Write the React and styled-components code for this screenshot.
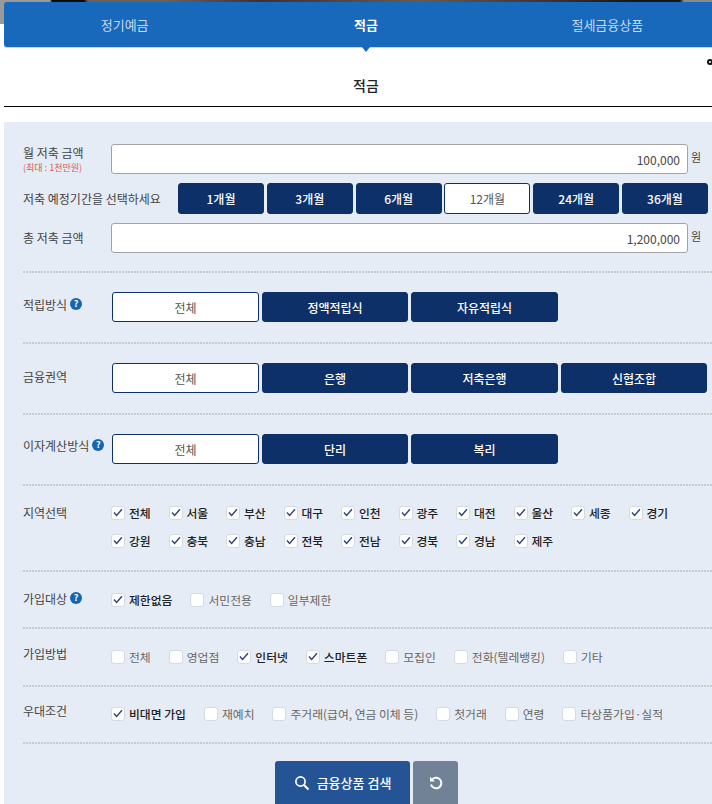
import React from 'react';
import styled, { createGlobalStyle } from 'styled-components';

const GlobalStyle = createGlobalStyle`
  html, body {
    margin: 0;
    padding: 0;
    background: #fff;
    overflow: hidden;
  }
  body {
    font-family: "Noto Sans CJK KR", "Noto Sans", sans-serif;
    color: #333;
  }
`;

const Page = styled.div`
  position: relative;
  width: 712px;
  height: 804px;
  overflow: hidden;
  padding-left: 4px;
  box-sizing: border-box;
`;

const Hero = styled.div`
  position: absolute;
  top: 0;
  left: 0;
  width: 712px;
  height: 24px;
  background: linear-gradient(90deg, #9a9a9a 0, #9a9a9a 50px, #0c0c10 52px, #0c0c10 84px, #6e5f57 88px, #6e5f57 170px, #3c3230 260px, #6a5a50 420px, #3a302c 560px, #14141a 640px, #14141a 680px, #8a8a8a 684px);
`;

const Tabs = styled.div`
  position: relative;
  display: grid;
  grid-template-columns: repeat(3, 1fr);
  width: 724px;
  height: 45px;
  margin-top: 2px;
  background: #1868bb;
  border-radius: 3px 0 0 3px;
  box-shadow: 0 1px 0 #c4d6ea;
`;

const Tab = styled.div`
  display: flex;
  align-items: center;
  justify-content: center;
  position: relative;
  font-size: 13px;
  color: ${(p) => (p.$active ? '#fff' : '#c6daf0')};
  font-weight: ${(p) => (p.$active ? 700 : 400)};
  ${(p) =>
    p.$active &&
    `&:after {
      content: '';
      position: absolute;
      left: 50%;
      bottom: -5px;
      margin-left: -4px;
      border-left: 4px solid transparent;
      border-right: 4px solid transparent;
      border-top: 5px solid #1868bb;
    }`}
`;

const Title = styled.h2`
  margin: 0;
  height: 60px;
  padding-top: 27px;
  box-sizing: border-box;
  border-bottom: 1px solid #000;
  font-size: 14px;
  line-height: 22px;
  font-weight: 500;
  color: #222;
  text-align: center;
  width: 724px;
`;

const Dot = styled.span`
  position: absolute;
  top: 59px;
  left: 707px;
  width: 6px;
  height: 6px;
  border: 2px solid #111;
  border-radius: 50%;
  box-sizing: border-box;
`;

const Panel = styled.div`
  margin-top: 15px;
  width: 708px;
  height: 700px;
  background: #e6ecf5;
  padding: 22px 0 0 19px;
  box-sizing: border-box;
`;

const Row = styled.div`
  display: flex;
  align-items: ${(p) => p.$align || 'center'};
  height: ${(p) => p.$h}px;
  margin-bottom: ${(p) => p.$mb || 0}px;
`;

const Label = styled.div`
  width: ${(p) => p.$w || 88}px;
  flex-shrink: 0;
  box-sizing: border-box;
  padding-bottom: ${(p) => p.$raise || 0}px;
  font-size: 12px;
  line-height: 16px;
  color: #444;
  white-space: nowrap;
`;

const Limit = styled.div`
  margin-top: 1px;
  font-size: 9px;
  line-height: 11px;
  color: #d0605f;
`;

const AmountInput = styled.div`
  width: 577px;
  height: 30px;
  box-sizing: border-box;
  background: #fff;
  border: 1px solid #a3a3a3;
  border-radius: 3px;
  padding-right: 7px;
  font-size: 12px;
  line-height: 30px;
  text-align: right;
  color: #444;
`;

const Unit = styled.span`
  margin-left: 3px;
  font-size: 11px;
  color: #444;
  align-self: flex-start;
  line-height: 26px;
`;

const Buttons = styled.div`
  display: flex;
  gap: ${(p) => p.$gap || 3}px;
`;

const Choice = styled.div`
  width: ${(p) => p.$w}px;
  height: ${(p) => p.$h || 30}px;
  box-sizing: border-box;
  display: flex;
  align-items: center;
  justify-content: center;
  border-radius: 3px;
  border: 1px solid #0e3068;
  font-size: 12px;
  background: ${(p) => (p.$on ? '#fff' : '#0e3068')};
  color: ${(p) => (p.$on ? '#555' : '#fff')};
  font-weight: ${(p) => (p.$on ? 400 : 500)};
`;

const Dash = styled.div`
  width: 689px;
  height: 2px;
  margin: ${(p) => p.$top}px 0 ${(p) => p.$bottom}px;
  background: repeating-linear-gradient(90deg, #c8cacd 0, #c8cacd 2px, transparent 2px, transparent 3px);
`;

const Help = styled.span`
  display: inline-flex;
  align-items: center;
  justify-content: center;
  width: 12px;
  height: 12px;
  margin-left: 3px;
  border-radius: 50%;
  background: #1565b0;
  color: #fff;
  font-size: 9px;
  font-weight: 700;
  line-height: 12px;
  vertical-align: 3px;
`;

const Checks = styled.div`
  display: flex;
  flex-wrap: wrap;
  row-gap: 13px;
  width: 600px;
`;

const Check = styled.div`
  display: flex;
  align-items: center;
  height: 15px;
  width: ${(p) => p.$w}px;
  margin-right: ${(p) => (p.$w ? 0 : p.$mr ?? 18)}px;
  font-size: 11.8px;
  line-height: 15px;
  white-space: nowrap;
  color: ${(p) => (p.$on ? '#222' : '#666')};
  font-weight: ${(p) => (p.$on ? 500 : 400)};
`;

const Box = styled.span`
  flex-shrink: 0;
  box-sizing: border-box;
  width: 14px;
  height: 14px;
  margin-right: 4px;
  border: 1px solid #d5d9e0;
  border-radius: 3px;
  background: #fff;
  display: flex;
  align-items: center;
  justify-content: center;
`;

const Actions = styled.div`
  display: flex;
  gap: 3px;
  margin-left: 252px;
`;

const SearchButton = styled.div`
  width: 135px;
  height: 43px;
  background: #245396;
  border-radius: 3px 3px 0 0;
  color: #fff;
  font-size: 13px;
  font-weight: 500;
  display: flex;
  align-items: center;
  justify-content: center;
  gap: 7px;
`;

const ResetButton = styled.div`
  width: 45px;
  height: 43px;
  background: #718196;
  border-radius: 3px 3px 0 0;
  display: flex;
  align-items: center;
  justify-content: center;
`;

const Tick = () => (
  <svg width="10" height="9" viewBox="0 0 10 9" fill="none">
    <path d="M1 4.6 3.6 7.4 9 1.2" stroke="#2d3f7c" strokeWidth="1.4" />
  </svg>
);

const CheckItem = ({ on, w, mr, children }) => (
  <Check $on={on} $w={w} $mr={mr}>
    <Box>{on && <Tick />}</Box>
    {children}
  </Check>
);

const regions = ['전체', '서울', '부산', '대구', '인천', '광주', '대전', '울산', '세종', '경기', '강원', '충북', '충남', '전북', '전남', '경북', '경남', '제주'];
const periods = ['1개월', '3개월', '6개월', '12개월', '24개월', '36개월'];

export default function App() {
  return (
    <>
      <GlobalStyle />
      <Page>
        <Hero />
        <Tabs>
          <Tab>정기예금</Tab>
          <Tab $active>적금</Tab>
          <Tab>절세금융상품</Tab>
        </Tabs>
        <Title>적금</Title>
        <Dot />
        <Panel>
          <Row $h={30} $mb={9}>
            <Label>
              월 저축 금액
              <Limit>(최대 : 1천만원)</Limit>
            </Label>
            <AmountInput>100,000</AmountInput>
            <Unit>원</Unit>
          </Row>
          <Row $h={31} $mb={9}>
            <Label $w={155}>저축 예정기간을 선택하세요</Label>
            <Buttons $gap={2.8}>
              {periods.map((p) => (
                <Choice key={p} $w={86} $h={31} $on={p === '12개월'}>{p}</Choice>
              ))}
            </Buttons>
          </Row>
          <Row $h={30}>
            <Label>총 저축 금액</Label>
            <AmountInput>1,200,000</AmountInput>
            <Unit>원</Unit>
          </Row>
          <Dash $top={18} $bottom={19} />
          <Row $h={30}>
            <Label $w={89} $raise={4}>적립방식<Help>?</Help></Label>
            <Buttons>
              <Choice $w={147} $on>전체</Choice>
              <Choice $w={146}>정액적립식</Choice>
              <Choice $w={147}>자유적립식</Choice>
            </Buttons>
          </Row>
          <Dash $top={20} $bottom={19} />
          <Row $h={30}>
            <Label $w={89} $raise={3}>금융권역</Label>
            <Buttons>
              <Choice $w={147} $on>전체</Choice>
              <Choice $w={146}>은행</Choice>
              <Choice $w={147}>저축은행</Choice>
              <Choice $w={146}>신협조합</Choice>
            </Buttons>
          </Row>
          <Dash $top={20} $bottom={19} />
          <Row $h={30}>
            <Label $w={89} $raise={6}>이자계산방식<Help>?</Help></Label>
            <Buttons>
              <Choice $w={147} $on>전체</Choice>
              <Choice $w={146}>단리</Choice>
              <Choice $w={147}>복리</Choice>
            </Buttons>
          </Row>
          <Dash $top={20} $bottom={19} />
          <Row $h={50} $align="flex-start">
            <Label>지역선택</Label>
            <Checks>
              {regions.map((r) => (
                <CheckItem key={r} on w={57.5}>{r}</CheckItem>
              ))}
            </Checks>
          </Row>
          <Dash $top={15} $bottom={20} />
          <Row $h={15}>
            <Label $raise={2}>가입대상<Help>?</Help></Label>
            <CheckItem on>제한없음</CheckItem>
            <CheckItem>서민전용</CheckItem>
            <CheckItem>일부제한</CheckItem>
          </Row>
          <Dash $top={20} $bottom={20} />
          <Row $h={15}>
            <Label $raise={5}>가입방법</Label>
            <CheckItem>전체</CheckItem>
            <CheckItem>영업점</CheckItem>
            <CheckItem on>인터넷</CheckItem>
            <CheckItem on>스마트폰</CheckItem>
            <CheckItem>모집인</CheckItem>
            <CheckItem>전화(텔레뱅킹)</CheckItem>
            <CheckItem>기타</CheckItem>
          </Row>
          <Dash $top={21} $bottom={19} />
          <Row $h={15}>
            <Label $raise={5}>우대조건</Label>
            <CheckItem on>비대면 가입</CheckItem>
            <CheckItem>재예치</CheckItem>
            <CheckItem>주거래(급여, 연금 이체 등)</CheckItem>
            <CheckItem>첫거래</CheckItem>
            <CheckItem>연령</CheckItem>
            <CheckItem>타상품가입·실적</CheckItem>
          </Row>
          <Dash $top={21} $bottom={17} />
          <Actions>
            <SearchButton>
              <svg width="16" height="16" viewBox="0 0 16 16" fill="none">
                <circle cx="6.5" cy="6.5" r="4.6" stroke="#fff" strokeWidth="1.7" />
                <path d="M10 10l4.5 4.5" stroke="#fff" strokeWidth="2.2" />
              </svg>
              금융상품 검색
            </SearchButton>
            <ResetButton>
              <svg width="16" height="16" viewBox="0 0 16 16" fill="none">
                <path d="M3.6 5.2A5.3 5.3 0 1 1 3 9.5" stroke="#fff" strokeWidth="2" />
                <path d="M2 1.8v4.8h4.8z" fill="#fff" />
              </svg>
            </ResetButton>
          </Actions>
        </Panel>
      </Page>
    </>
  );
}
